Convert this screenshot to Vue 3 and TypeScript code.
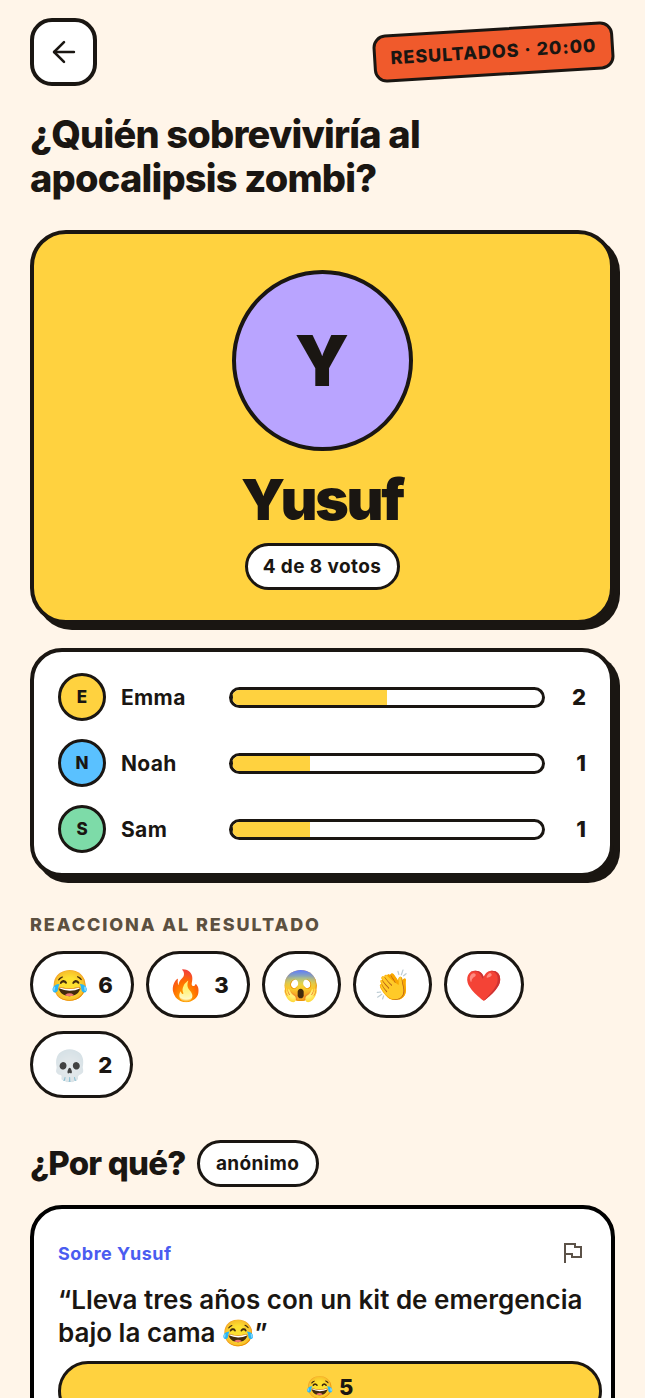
<script setup lang="ts">
const rows = [
  { i: 'E', name: 'Emma', c: '#ffd23f', w: 50, n: 2 },
  { i: 'N', name: 'Noah', c: '#5ac1ff', w: 25, n: 1 },
  { i: 'S', name: 'Sam', c: '#7ddba8', w: 25, n: 1 },
]
const reactions = [
  { e: '😂', n: 6 },
  { e: '🔥', n: 3 },
  { e: '😱' },
  { e: '👏' },
  { e: '❤️' },
  { e: '💀', n: 2 },
]
</script>

<template>
  <div class="page">
    <header class="top">
      <button class="back" aria-label="Volver">
        <svg width="34" height="34" viewBox="0 0 24 24" fill="none" stroke="#1a1612" stroke-width="1.8" stroke-linecap="round" stroke-linejoin="round">
          <path d="M19 12H5" /><path d="M12 19l-7-7 7-7" />
        </svg>
      </button>
      <div class="tag">RESULTADOS · 20:00</div>
    </header>

    <h1 class="title">¿Quién sobreviviría al<br />apocalipsis zombi?</h1>

    <section class="winner">
      <div class="avatar">Y</div>
      <div class="name">Yusuf</div>
      <div class="votes">4 de 8 votos</div>
    </section>

    <section class="others">
      <div v-for="r in rows" :key="r.i" class="row">
        <span class="mini" :style="{ background: r.c }">{{ r.i }}</span>
        <span class="rname">{{ r.name }}</span>
        <span class="bar"><span class="fill" :style="{ width: r.w + '%' }"></span></span>
        <span class="count">{{ r.n }}</span>
      </div>
    </section>

    <div class="label">REACCIONA AL RESULTADO</div>
    <div class="reactions">
      <div v-for="r in reactions" :key="r.e" class="chip">
        <span class="emoji">{{ r.e }}</span>
        <span v-if="r.n" class="chipn">{{ r.n }}</span>
      </div>
    </div>

    <div class="why">
      <h2>¿Por qué?</h2>
      <span class="anon">anónimo</span>
    </div>

    <article class="note">
      <div class="nhead">
        <span class="about">Sobre Yusuf</span>
        <svg class="flag" width="24" height="24" viewBox="0 0 24 24" fill="none" stroke="#5c5248" stroke-width="2" stroke-linejoin="miter">
          <path d="M5 22V3h10v3h6v10h-9v-3H5" />
        </svg>
      </div>
      <p class="quote">“Lleva tres años con un kit de emergencia bajo la cama 😂”</p>
      <div class="react">😂 5</div>
    </article>
  </div>
</template>

<style>
html, body { margin: 0; background: #fff5e9; }
</style>

<style scoped>
.page {
  box-sizing: border-box;
  width: 645px;
  height: 1398px;
  overflow: hidden;
  padding: 18px 31px 0 30px;
  background: #fff5e9;
  color: #1a1612;
  font-family: Inter, "Noto Color Emoji", sans-serif;
}
.top { display: flex; justify-content: space-between; align-items: flex-start; }
.back {
  box-sizing: border-box;
  width: 67px;
  height: 68px;
  border: 4px solid #1a1612;
  border-radius: 22px;
  background: #fff;
  display: flex;
  align-items: center;
  justify-content: center;
  padding: 0;
}
.tag {
  margin-top: 10px;
  box-sizing: border-box;
  width: 241px;
  height: 48px;
  line-height: 42px;
  text-align: center;
  background: #f05a2c;
  border: 3px solid #1a1612;
  border-radius: 13px;
  font-size: 18px;
  font-weight: 800;
  letter-spacing: 0.95px;
  white-space: nowrap;
  transform: rotate(-3.5deg);
}
.title {
  margin: 26px 0 0;
  font-size: 38px;
  line-height: 44px;
  font-weight: 800;
  letter-spacing: -0.8px;
}
.winner {
  box-sizing: border-box;
  margin-top: 30px;
  width: 584px;
  height: 394px;
  border: 4px solid #1a1612;
  border-radius: 36px;
  background: #ffd23f;
  box-shadow: 6px 6px 0 #1a1612;
  display: flex;
  flex-direction: column;
  align-items: center;
  padding-top: 36px;
}
.avatar {
  box-sizing: border-box;
  width: 181px;
  height: 181px;
  border: 4px solid #1a1612;
  border-radius: 50%;
  background: #b9a4ff;
  display: flex;
  align-items: center;
  justify-content: center;
  font-size: 70px;
  font-weight: 900;
}
.name {
  margin-top: 16px;
  font-size: 57px;
  line-height: 66px;
  font-weight: 900;
  letter-spacing: -2.3px;
}
.votes {
  box-sizing: border-box;
  margin-top: 10px;
  width: 155px;
  height: 47px;
  border: 3px solid #1a1612;
  border-radius: 24px;
  background: #fff;
  text-align: center;
  line-height: 41px;
  font-size: 19px;
  font-weight: 700;
  letter-spacing: 0.4px;
}
.others {
  box-sizing: border-box;
  margin-top: 24px;
  width: 584px;
  height: 229px;
  border: 4px solid #1a1612;
  border-radius: 32px;
  background: #fff;
  box-shadow: 6px 6px 0 #1a1612;
  padding: 21px 24px 0 24px;
  display: flex;
  flex-direction: column;
  gap: 18px;
}
.row { display: flex; align-items: center; height: 48px; }
.mini {
  box-sizing: border-box;
  flex: none;
  width: 48px;
  height: 48px;
  border: 3px solid #1a1612;
  border-radius: 50%;
  display: flex;
  align-items: center;
  justify-content: center;
  font-size: 17px;
  font-weight: 800;
}
.rname { width: 108px; margin-left: 15px; font-size: 21px; font-weight: 700; letter-spacing: 0.35px; }
.bar {
  box-sizing: border-box;
  width: 316px;
  height: 21px;
  border: 3px solid #1a1612;
  border-radius: 11px;
  background: #fff;
  overflow: hidden;
  display: block;
}
.fill {
  box-sizing: border-box;
  display: block;
  height: 100%;
  background: #ffd23f;
  border-left: 1px solid #1a1612;
}
.count { flex: 1; text-align: right; font-size: 22px; font-weight: 800; }
.label {
  margin-top: 37px;
  font-size: 18px;
  line-height: 22px;
  font-weight: 800;
  letter-spacing: 1.9px;
  color: #5c5040;
}
.reactions { margin-top: 15px; display: flex; flex-wrap: wrap; gap: 13px 12px; width: 520px; }
.chip {
  box-sizing: border-box;
  height: 67px;
  border: 3px solid #1a1612;
  border-radius: 34px;
  background: #fff;
  padding: 0 18px;
  display: flex;
  align-items: center;
  gap: 10px;
}
.emoji { font-size: 30px; line-height: 1; }
.chipn { font-size: 22px; font-weight: 800; }
.why { margin-top: 42px; display: flex; align-items: center; gap: 11px; }
.why h2 { margin: 0; font-size: 33px; line-height: 47px; font-weight: 800; letter-spacing: -0.8px; }
.anon {
  box-sizing: border-box;
  width: 122px;
  height: 47px;
  border: 3px solid #1a1612;
  border-radius: 24px;
  background: #fff;
  text-align: center;
  line-height: 41px;
  font-size: 19px;
  font-weight: 700;
  letter-spacing: 0.4px;
}
.note {
  box-sizing: border-box;
  margin-top: 18px;
  width: 585px;
  height: 300px;
  border: 4px solid #000;
  border-radius: 32px;
  background: #fff;
  padding: 24px 9px 0 24px;
}
.nhead { display: flex; justify-content: space-between; align-items: center; padding-right: 18px; height: 40px; }
.about { font-size: 18px; font-weight: 700; color: #4a5cf0; letter-spacing: 0.5px; }
.quote { margin: 10px 0 0; font-size: 26px; line-height: 33px; font-weight: 600; }
.react {
  box-sizing: border-box;
  margin-top: 12px;
  height: 60px;
  border: 3px solid #1a1612;
  border-radius: 30px;
  background: #ffd23f;
  text-align: center;
  line-height: 46px;
  font-size: 22px;
  font-weight: 800;
}
</style>
